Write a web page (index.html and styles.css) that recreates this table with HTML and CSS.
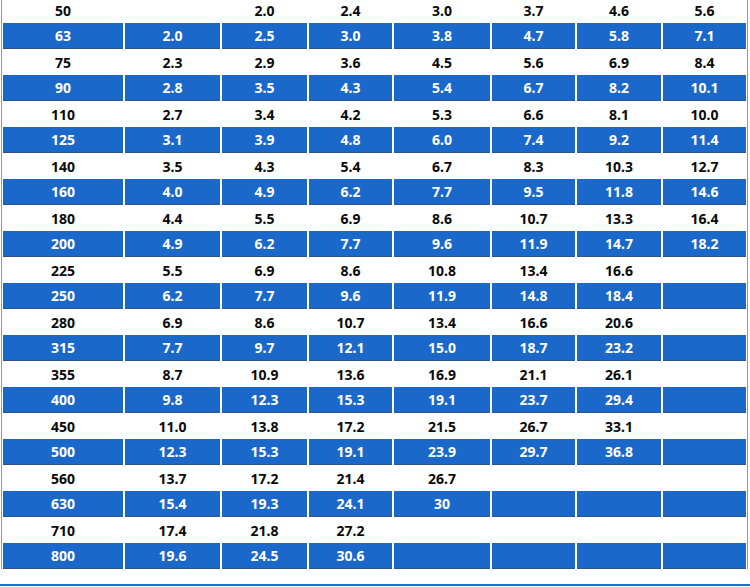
FILE: index.html
```html
<!DOCTYPE html>
<html>
<head>
<meta charset="utf-8">
<link rel="stylesheet" href="styles.css">
</head>
<body>
<div class="page">
  <div class="table">
    <div class="row"><div>50</div><div></div><div>2.0</div><div>2.4</div><div>3.0</div><div>3.7</div><div>4.6</div><div>5.6</div></div>
    <div class="row blue"><div>63</div><div>2.0</div><div>2.5</div><div>3.0</div><div>3.8</div><div>4.7</div><div>5.8</div><div>7.1</div></div>
    <div class="row"><div>75</div><div>2.3</div><div>2.9</div><div>3.6</div><div>4.5</div><div>5.6</div><div>6.9</div><div>8.4</div></div>
    <div class="row blue"><div>90</div><div>2.8</div><div>3.5</div><div>4.3</div><div>5.4</div><div>6.7</div><div>8.2</div><div>10.1</div></div>
    <div class="row"><div>110</div><div>2.7</div><div>3.4</div><div>4.2</div><div>5.3</div><div>6.6</div><div>8.1</div><div>10.0</div></div>
    <div class="row blue"><div>125</div><div>3.1</div><div>3.9</div><div>4.8</div><div>6.0</div><div>7.4</div><div>9.2</div><div>11.4</div></div>
    <div class="row"><div>140</div><div>3.5</div><div>4.3</div><div>5.4</div><div>6.7</div><div>8.3</div><div>10.3</div><div>12.7</div></div>
    <div class="row blue"><div>160</div><div>4.0</div><div>4.9</div><div>6.2</div><div>7.7</div><div>9.5</div><div>11.8</div><div>14.6</div></div>
    <div class="row"><div>180</div><div>4.4</div><div>5.5</div><div>6.9</div><div>8.6</div><div>10.7</div><div>13.3</div><div>16.4</div></div>
    <div class="row blue"><div>200</div><div>4.9</div><div>6.2</div><div>7.7</div><div>9.6</div><div>11.9</div><div>14.7</div><div>18.2</div></div>
    <div class="row"><div>225</div><div>5.5</div><div>6.9</div><div>8.6</div><div>10.8</div><div>13.4</div><div>16.6</div><div></div></div>
    <div class="row blue"><div>250</div><div>6.2</div><div>7.7</div><div>9.6</div><div>11.9</div><div>14.8</div><div>18.4</div><div></div></div>
    <div class="row"><div>280</div><div>6.9</div><div>8.6</div><div>10.7</div><div>13.4</div><div>16.6</div><div>20.6</div><div></div></div>
    <div class="row blue"><div>315</div><div>7.7</div><div>9.7</div><div>12.1</div><div>15.0</div><div>18.7</div><div>23.2</div><div></div></div>
    <div class="row"><div>355</div><div>8.7</div><div>10.9</div><div>13.6</div><div>16.9</div><div>21.1</div><div>26.1</div><div></div></div>
    <div class="row blue"><div>400</div><div>9.8</div><div>12.3</div><div>15.3</div><div>19.1</div><div>23.7</div><div>29.4</div><div></div></div>
    <div class="row"><div>450</div><div>11.0</div><div>13.8</div><div>17.2</div><div>21.5</div><div>26.7</div><div>33.1</div><div></div></div>
    <div class="row blue"><div>500</div><div>12.3</div><div>15.3</div><div>19.1</div><div>23.9</div><div>29.7</div><div>36.8</div><div></div></div>
    <div class="row"><div>560</div><div>13.7</div><div>17.2</div><div>21.4</div><div>26.7</div><div></div><div></div><div></div></div>
    <div class="row blue"><div>630</div><div>15.4</div><div>19.3</div><div>24.1</div><div>30</div><div></div><div></div><div></div></div>
    <div class="row"><div>710</div><div>17.4</div><div>21.8</div><div>27.2</div><div></div><div></div><div></div><div></div></div>
    <div class="row blue"><div>800</div><div>19.6</div><div>24.5</div><div>30.6</div><div></div><div></div><div></div><div></div></div>
  </div>
  <div class="rule"></div>
</div>
</body>
</html>
```

FILE: styles.css
```css
html, body {
  margin: 0;
  padding: 0;
  background: #ffffff;
}
.page {
  width: 750px;
  height: 587px;
  overflow: hidden;
  font-family: "Noto Sans", "Open Sans", sans-serif;
  font-weight: 700;
  font-size: 14px;
}
.table {
  margin-top: -3px;
  margin-left: 1px;
  width: 747px;
  border-left: 1px solid #9a9a9a;
  border-right: 1px solid #9a9a9a;
  padding-left: 1px;
  box-sizing: border-box;
}
.row {
  display: grid;
  grid-template-columns: 120px 95px 85px 83px 96px 83px 84px 83px;
  column-gap: 2px;
  height: 26px;
}
.row > div {
  display: flex;
  align-items: center;
  justify-content: center;
  color: #0a0a0a;
}
.row.blue > div {
  background: #1b68cb;
  color: #ffffff;
  border-bottom: 1px solid #2e5488;
}
.rule {
  margin-top: 15px;
  height: 2px;
  background: #1b6fd0;
}
```
